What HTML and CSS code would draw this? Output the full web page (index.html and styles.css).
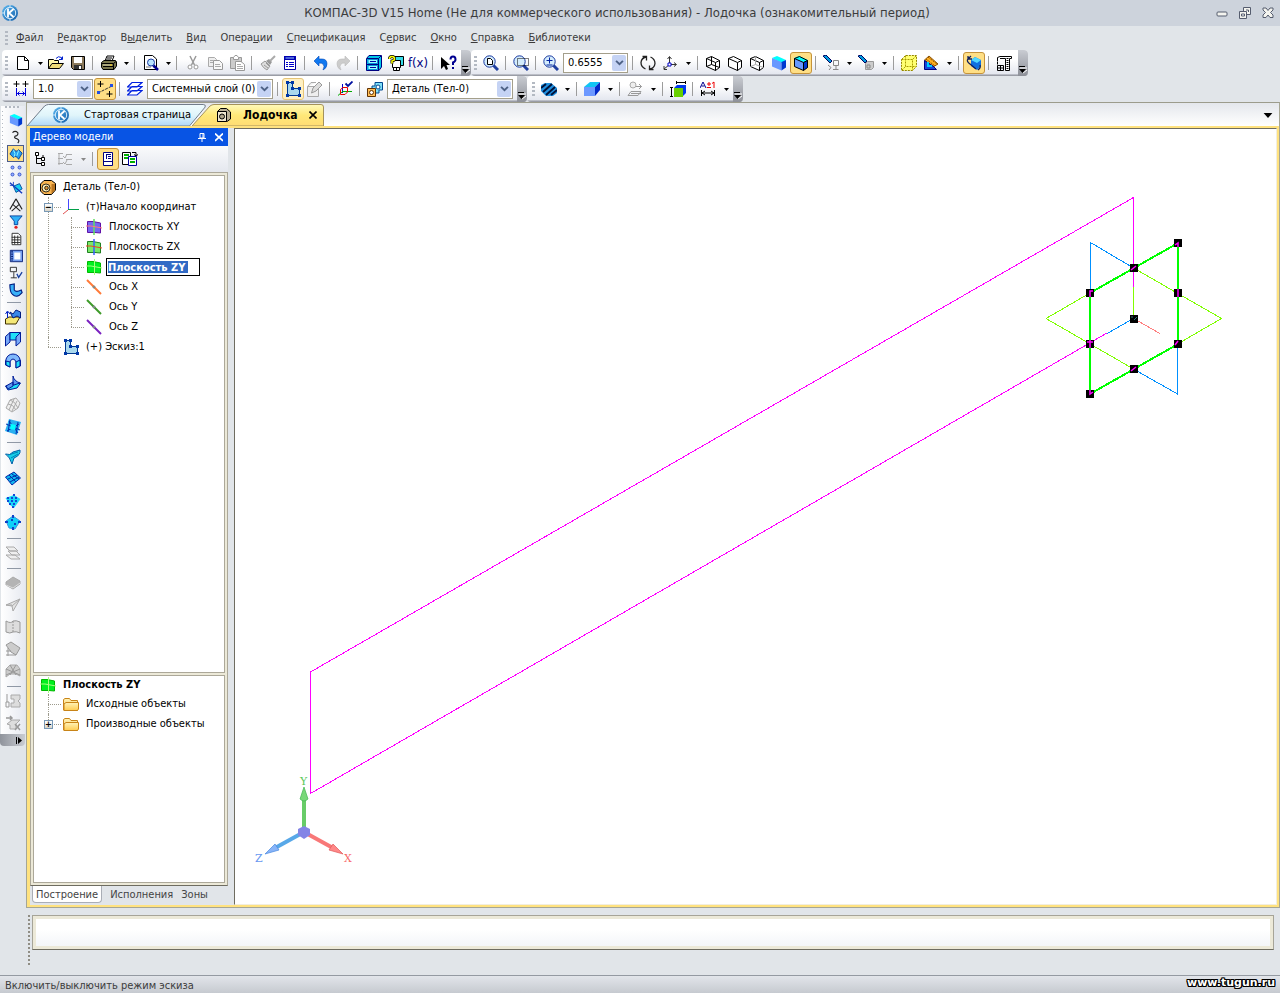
FILE: index.html
```html
<!DOCTYPE html>
<html lang="ru">
<head>
<meta charset="utf-8">
<title>КОМПАС-3D V15 Home</title>
<link rel="stylesheet" href="styles.css">
</head>
<body>
<svg class="defs" aria-hidden="true">
<defs>
<linearGradient id="gb" x1="0" y1="0" x2="1" y2="1"><stop offset="0" stop-color="#5cb8f0"/><stop offset="1" stop-color="#125ca8"/></linearGradient>
<linearGradient id="gf" x1="0" y1="0" x2="0" y2="1"><stop offset="0" stop-color="#fff3b8"/><stop offset="1" stop-color="#ffcc50"/></linearGradient>
<symbol id="logo" viewBox="0 0 16 16"><circle cx="8" cy="8" r="8" fill="url(#gb)"/><circle cx="8" cy="8" r="5.700" fill="none" stroke="#d8ecfa"/><path d="M6 3.500V12.500M11.500 4L7 8L11.500 12" fill="none" stroke="#fff" stroke-width="1.800"/><path d="M0 8H3M8 0V2M8 14V16" stroke="#d8ecfa"/></symbol>
<symbol id="new" viewBox="0 0 16 16"><path d="M2.500 1.500H9.500L13.500 5.500V14.500H2.500Z" fill="#fff" stroke="#000"/><path d="M9.500 1.500V5.500H13.500" fill="none" stroke="#000"/></symbol>
<symbol id="open" viewBox="0 0 16 16"><path d="M.5 13.500V4.500H5.500L6.500 5.500H10.500V8.500" fill="#fff7a8" stroke="#000"/><path d="M.5 13.500L4 8.500H15.500L11.500 13.500Z" fill="#f0dc78" stroke="#000"/><path d="M8 3.500Q10 .5 13.500 2.500V5M11 4.500H14.500V1.500" fill="none" stroke="#0020d0"/></symbol>
<symbol id="save" viewBox="0 0 16 16"><path d="M1.500 1.500H14.500V14.500H3.500L1.500 12.500Z" fill="#8c7a5c" stroke="#000"/><path d="M4 2H12V8H4Z" fill="#fff"/><path d="M4 10H12V14H4Z" fill="#333"/><path d="M9 11H11V14H9Z" fill="#fff"/></symbol>
<symbol id="print" viewBox="0 0 16 16"><path d="M4 6L6 1H13L11 6Z" fill="#fff" stroke="#000"/><path d="M6 3H11M5 5H10" stroke="#000"/><path d="M.5 7.500L3 5.500H14.500L15.500 7V11L13 14.500H2L.5 12Z" fill="#77754c" stroke="#000"/><path d="M1 8.500H12.500L15 6.500M2 11.500H12M12.500 8.500V14" fill="none" stroke="#000"/><path d="M2 10H11" stroke="#dfdab0"/><path d="M9 10H11" stroke="#fc0"/></symbol>
<symbol id="preview" viewBox="0 0 16 16"><path d="M1.500 14.500V.5H9.500L13.500 4V14.500Z" fill="#fff" stroke="#000"/><path d="M3 12H8M10 12H12" stroke="#777"/><path d="M10 10L15 15" stroke="#000090" stroke-width="2.500"/><circle cx="8" cy="7.500" r="3.500" fill="#b8e4ff" stroke="#1838a0"/></symbol>
<symbol id="cut" viewBox="0 0 16 16"><path d="M5 1L9.500 10M11 1L6.500 10" stroke="#999" stroke-width="1.500"/><circle cx="5" cy="12" r="2" fill="#fff" stroke="#999"/><circle cx="11" cy="12" r="2" fill="#fff" stroke="#999"/></symbol>
<symbol id="copy" viewBox="0 0 16 16"><path d="M1.500 2.500H7.500L9.500 4.500V11.500H1.500Z" fill="#eee" stroke="#aaa"/><path d="M6.500 5.500H12.500L15.500 8.500V14.500H6.500Z" fill="#f8f8f8" stroke="#999"/><path d="M3 5.500H6M3 7.500H6M8 9.500H13M8 11.500H14" stroke="#aaa"/></symbol>
<symbol id="paste" viewBox="0 0 16 16"><path d="M1.500 2.500H12.500V13.500H1.500Z" fill="#ccc" stroke="#999"/><path d="M4.500 4.500V2.500L6 .5H8L9.500 2.500V4.500Z" fill="#fff" stroke="#999"/><path d="M6.500 6.500H12L15.500 9.500V15.500H6.500Z" fill="#fff" stroke="#999"/><path d="M8 9.500H12M8 11.500H14M8 13.500H14" stroke="#aaa"/></symbol>
<symbol id="brush" viewBox="0 0 16 16"><path d="M1 9L5 6L10 11L7 15Q3 13 1 9Z" fill="#ddd" stroke="#999"/><path d="M4 10L8 13M6 8L9 11" stroke="#999"/><path d="M6 6L9 4L12 7L10 10Z" fill="#999"/><path d="M10 6L15 1" stroke="#aaa" stroke-width="2"/></symbol>
<symbol id="props" viewBox="0 0 16 16"><path d="M2.500 2H13.500V14.500H2.500Z" fill="#fff" stroke="#0000a0"/><path d="M2 1H14V5H2Z" fill="#0000b0"/><path d="M4 7.500H6M4 9.500H6M4 11.500H6M7 7.500H12M7 9.500H12M7 11.500H12" stroke="#00c"/><path d="M3.500 3H12" stroke="#9cf"/></symbol>
<symbol id="undo" viewBox="0 0 16 16"><path d="M1 6L6 1V4H9Q14 4 14 9Q14 13 10 15Q12 11 10 9Q9 8 6 8V11Z" fill="#1078f0" stroke="#0048b8" stroke-width=".6"/></symbol>
<symbol id="redo" viewBox="0 0 16 16"><path d="M15 6L10 1V4H7Q2 4 2 9Q2 13 6 15Q4 11 6 9Q7 8 10 8V11Z" fill="#ccc" stroke="#bbb" stroke-width=".6"/></symbol>
<symbol id="cabinet" viewBox="0 0 16 16"><path d="M.5 3.500L3 .5H15.500V12L13 15.500H.5Z" fill="#00c8e8" stroke="#000080"/><path d="M1 3.500H12.500V15M12.500 3.500L15 1M1 9.500H12.500" fill="none" stroke="#000080"/><path d="M2 4.500H11.500V8.500H2ZM2 10.500H11.500V14.500H2Z" fill="#9ff" stroke="#0090d8"/><path d="M4 6.500H10M4 12.500H10" stroke="#0000a0"/></symbol>
<symbol id="vars" viewBox="0 0 16 16"><path d="M6.500 1.500H15.500V10.500H6.500Z" fill="#36dce8" stroke="#000"/><path d="M4.500 5.500H12.500V12.500H4.500Z" fill="#fff" stroke="#000"/><path d="M5.500 12.500H11.500V15.500H5.500ZM8.500 12.500V15.500" fill="#fff" stroke="#000"/><path d="M1.500 4Q1.500 1.500 4 1.500T6.500 4Q6.500 5.500 4 6V8.500" fill="none" stroke="#000" stroke-width="3"/><path d="M1.500 4Q1.500 1.500 4 1.500T6.500 4Q6.500 5.500 4 6V8.500" fill="none" stroke="#ff0" stroke-width="1.600"/></symbol>
<symbol id="help" viewBox="0 0 16 16"><path d="M0 2V14L3 11L5 15L7 14L5.500 10H9Z" fill="#000"/><path d="M9.500 4.500Q9.500 1.500 12 1.500T14.500 4.500Q14.500 6.500 12 7.500V10M12 12V14" fill="none" stroke="#000090" stroke-width="2"/></symbol>
<symbol id="mag" viewBox="0 0 16 16"><path d="M10.500 10.500L15 15" stroke="#2040a0" stroke-width="3"/><circle cx="6.500" cy="6.500" r="5.700" fill="#d4ecfc" stroke="#1838a0"/></symbol>
<symbol id="magp" viewBox="0 0 16 16"><use href="#mag"/><path d="M4.500 3.500H7.500L9.500 5.500V9.500H4.500Z" fill="#fff" stroke="#000"/></symbol>
<symbol id="magr" viewBox="0 0 16 16"><use href="#mag"/><path d="M4.500 3.500H15.500V10.500H4.500Z" fill="none" stroke="#000" stroke-dasharray="1 1"/></symbol>
<symbol id="magz" viewBox="0 0 16 16"><use href="#mag"/><path d="M3.500 5.500H9.500M6.500 2.500V8.500M3.500 10H9.500" stroke="#0020a0"/></symbol>
<symbol id="rot" viewBox="0 0 16 16"><path d="M5.500 14Q1 12 1 7.500Q1.500 3 6 2M10.500 2Q15 4 15 8.500Q14.500 13 10 14M2.500 1.500H6.500V5.500M13.500 14.500H9.500V10.500" fill="none" stroke="#222" stroke-width="1.300"/></symbol>
<symbol id="axes" viewBox="0 0 16 16"><path d="M7.500 9V2M8 9.500H14M7 10L2 14M5.500 4L7.500 1.500L9.500 4M12 7.500L14.500 9.500L12 11.500M2 11V14.500H5" fill="none" stroke="#333"/><path d="M6 8H9V11H6Z" fill="#fff" stroke="#00c"/></symbol>
<symbol id="wire" viewBox="0 0 16 16"><path d="M1.500 3.500L6.500 1.500L14.500 5.500V12.500L10.500 15.500L1.500 11.500ZM1.500 3.500L10.500 7.500V15.500M10.500 7.500L14.500 5.500" fill="#fff" stroke="#000"/></symbol>
<symbol id="wire1" viewBox="0 0 16 16"><use href="#wire"/><path d="M6.500 1.500V9.500L1.500 11.500M6.500 9.500L14.500 12.500" fill="none" stroke="#000"/></symbol>
<symbol id="wire3" viewBox="0 0 16 16"><use href="#wire"/><path d="M6.500 1.500V9.500L1.500 11.500M6.500 9.500L14.500 12.500" fill="none" stroke="#aaa"/></symbol>
<symbol id="solid" viewBox="0 0 16 16"><path d="M1 3L6 1L15 5L10.500 8Z" fill="#0ff"/><path d="M1 3L10.500 7V15.500L1 11.500Z" fill="#6898ff"/><path d="M10.500 7L15 5V12.500L10.500 15.500Z" fill="#0038d0"/></symbol>
<symbol id="solide" viewBox="0 0 16 16"><use href="#solid"/><path d="M1.500 3.500L6.500 1.500L14.500 5.500V12.500L10.500 15.500L1.500 11.500ZM1.500 3.500L10.500 7.500V15.500M10.500 7.500L14.500 5.500" fill="none" stroke="#000"/></symbol>
<symbol id="torch1" viewBox="0 0 16 16"><path d="M0 1L3 0L9 6L7 8Z" fill="#009cdd" stroke="#000060"/><path d="M10.500 5.500H15.500V10.500H10.500ZM13 11V14.500M10 14.500H15.500M5 10L8 12.500L6 15" fill="none" stroke="#888"/></symbol>
<symbol id="torch2" viewBox="0 0 16 16"><path d="M0 1L3 0L9 6L7 8Z" fill="#009cdd" stroke="#000060"/><path d="M7.500 8.500L9.500 6.500H15.500V12.500L13.500 14.500H7.500Z" fill="#ccc" stroke="#999"/><path d="M9 10H12V13H9Z" fill="none" stroke="#888"/></symbol>
<symbol id="ycube" viewBox="0 0 16 16"><path d="M.5 4.500L4.500 .5H15.500V11.500L11.500 15.500H.5Z" fill="#ffff70" stroke="#948600" stroke-dasharray="2 1"/><path d="M.5 4.500H11.500V15.500M11.500 4.500L15.500 .5M4.500 .5V11.500H15.500M4.500 11.500L.5 15.500" fill="none" stroke="#a89c00" stroke-dasharray="2 1"/></symbol>
<symbol id="section" viewBox="0 0 16 16"><path d="M1.500 5L6 1L15 9L10 12Z" fill="#ffb020" stroke="#8c5000"/><path d="M3 4L12 11M5 2L14 9" stroke="#8c5000" stroke-dasharray="2 1"/><path d="M1.500 5.500V14.500H13.500L10 11Z" fill="#1848d8" stroke="#000080"/><path d="M5 7V11H9" fill="none" stroke="#0cf" stroke-width="2"/></symbol>
<symbol id="turn" viewBox="0 0 16 16"><path d="M5 5L9 2L15 5V11L11 15L5 11Z" fill="#1070e0"/><path d="M5 5L9 2L15 5L11 8Z" fill="#50d8ff"/><path d="M5 1L2 4Q0 6 4 9L10 14M2 1V4H6M12 15Q15 13 14 10" fill="none" stroke="#10205c" stroke-width="1.300"/></symbol>
<symbol id="crane" viewBox="0 0 16 16"><path d="M1.500 6V2.500L4 1.500H15.500V3.500H13.500V15.500H9.500V3.500H4" fill="#fff" stroke="#000"/><path d="M1.500 6.500V9.500M1.500 10.500H7.500V15.500H1.500ZM4.500 10V15M2 13H7" fill="none" stroke="#000"/><path d="M11.500 3V15" stroke="#000" stroke-width="2" stroke-dasharray="1 1"/></symbol>
<symbol id="step" viewBox="0 0 16 16"><path d="M3.500 0V6M.5 3H6.500M12.500 0V6M9.500 3H15.500" stroke="#000"/><path d="M3.500 7V15M12.500 7V15M4 12.500H12M6.500 10.500L4.500 12.500L6.500 14.500M9.500 10.500L11.500 12.500L9.500 14.500" fill="none" stroke="#00d"/></symbol>
<symbol id="snap" viewBox="0 0 16 16"><path d="M3.500 0V6M.5 3H6.500M12.500 10V16M9.500 13H15.500" stroke="#000"/><path d="M1 12L15 5" stroke="#333" stroke-dasharray="3 1"/><path d="M0 10H3V13H0ZM13 3H16V6H13Z" fill="#2450e0"/></symbol>
<symbol id="layers" viewBox="0 0 16 16"><path d="M.5 14L5 9.500H15L10 14ZM.5 10L5 5.500H15L10 10ZM.5 6L5 1.500H15L10 6Z" fill="#fff" stroke="#0020e0" stroke-width="1.200"/></symbol>
<symbol id="sketch" viewBox="0 0 16 16"><path d="M2.500 1.500H7.500V7.500H14.500V14.500H2.500Z" fill="#a9d8ed" stroke="#003890"/><path d="M1 0H4V3H1ZM6 0H9V3H6ZM6 6H9V9H6ZM13 6H16V9H13ZM13 13H16V16H13ZM1 13H4V16H1Z" fill="#0038a8"/></symbol>
<symbol id="sketch2" viewBox="0 0 16 16"><path d="M.5 5.500H11.500V15.500H.5ZM.5 5.500L4 1.500H9" fill="#eee" stroke="#aaa"/><path d="M4.500 12L6 7L12 1L15 4L9 10Z" fill="#ddd" stroke="#999"/></symbol>
<symbol id="reb" viewBox="0 0 16 16"><path d="M5.500 3V12" stroke="#0000d0"/><path d="M5 10.500H15M1 14.500L5 11" stroke="#0a0"/><path d="M3.500 8.500L6 6.500H10.500V11L8 13.500H3.500Z" fill="none" stroke="#e00"/><path d="M8.500 2.500L11 5L15.500 .5" fill="none" stroke="#0010a0" stroke-width="1.800"/></symbol>
<symbol id="parts" viewBox="0 0 16 16"><path d="M8 1.500H15.500V9H12V12H5V5H8Z" fill="#80e0f8" stroke="#004890"/><circle cx="11" cy="6" r="2" fill="#fff" stroke="#004890"/><path d="M.5 7.500H8.500V15.500H.5Z" fill="#ffbd55" stroke="#603000"/><circle cx="4.500" cy="11.500" r="2" fill="#fff" stroke="#603000"/></symbol>
<symbol id="zebra" viewBox="0 0 16 16"><path d="M0 4L4 2H10L16 7V12L12 15H5L0 10Z" fill="#2090e0"/><path d="M0 7L5 3M2 11L11 3M5 14L14 6M10 14L16 9" stroke="#00123a" stroke-width="2"/></symbol>
<symbol id="face" viewBox="0 0 16 16"><path d="M0 6L6 1H16L11 6Z" fill="#10c4f4"/><path d="M0 6H11V15H0Z" fill="#6c98ff"/><path d="M11 6L16 1V9L11 15Z" fill="#0028c8"/></symbol>
<symbol id="msr" viewBox="0 0 16 16"><circle cx="6" cy="4" r="3" fill="#eee" stroke="#aaa"/><path d="M9 5.500H14.500M12 3L14.500 5.500L12 8M1 14.500L4 10.500H14L11 14.500ZM4 12.500H14" fill="none" stroke="#999"/></symbol>
<symbol id="dimc" viewBox="0 0 16 16"><path d="M4 7L7 4H16V12L13 15Z" fill="#0038f0"/><path d="M4 7H13V16H4Z" fill="#68d000"/><path d="M1.500 7V15.500M0 6.500H3M0 15.500H3M7 1.500H15M6.500 0V3M15.500 0V3" stroke="#000"/></symbol>
<symbol id="tol" viewBox="0 0 16 16"><path d="M0 7L3 1L6 7M1.500 5H4.500" fill="none" stroke="#000090"/><path d="M7 3H11M9 1V5M7 6.500H11M12 2.500L14 1V7" fill="none" stroke="#e00"/><path d="M1.500 9V15M14.500 9V15M2 12H14M5 10L2 12L5 14M11 10L14 12L11 14" fill="none" stroke="#000"/></symbol>
<symbol id="curve" viewBox="0 0 16 16"><path d="M4 3Q7 0 10 3Q11 6 7 7Q5 9 9 10Q13 12 10 15" fill="none" stroke="#222" stroke-width="1.300"/></symbol>
<symbol id="surf" viewBox="0 0 16 16"><path d="M1 8L5 2Q8 7 11 3L15 7L11 14Q8 9 5 12Z" fill="#28a0f0" stroke="#003c98"/><path d="M5 3Q8 8 6 11M11 4L9 10" stroke="#9ff" fill="none"/></symbol>
<symbol id="dots" viewBox="0 0 16 16"><g fill="#98b0ff" stroke="#2848c8"><circle cx="4" cy="4" r="1.700"/><circle cx="12" cy="4" r="1.700"/><circle cx="4" cy="12" r="1.700"/><circle cx="12" cy="12" r="1.700"/></g></symbol>
<symbol id="aux" viewBox="0 0 16 16"><path d="M5 6L12 3L15 9L8 13Z" fill="#18d0f0" stroke="#004098"/><path d="M1 2L15 14" stroke="#1038c0" stroke-width="1.500"/><path d="M1 5H5V1" stroke="#1038c0" fill="none"/></symbol>
<symbol id="compass" viewBox="0 0 16 16"><path d="M8 1L1 13M8 1L15 13M3 15L12 7M13 15L4 7" fill="none" stroke="#222" stroke-width="1.200"/></symbol>
<symbol id="funnel" viewBox="0 0 16 16"><path d="M1 1H15L10 7V11H6V7Z" fill="#30b0f8" stroke="#003c98"/><circle cx="8" cy="14" r="1.800" fill="#e02020"/></symbol>
<symbol id="sheet" viewBox="0 0 16 16"><path d="M3.500 1.500H10.500L13.500 4.500V14.500H3.500ZM3 6H13M3 9H13M3 12H13M6.500 4V14M10 4V14" fill="#fff" stroke="#222"/></symbol>
<symbol id="book" viewBox="0 0 16 16"><path d="M1.500 1.500H15.500V14.500H1.500Z" fill="#78a0f0" stroke="#001870"/><path d="M6 4H13V12H6Z" fill="#fff"/><path d="M3.500 2V14" stroke="#001870" stroke-width="2" stroke-dasharray="1 1"/></symbol>
<symbol id="check" viewBox="0 0 16 16"><path d="M1.500 1.500H8.500V6.500H1.500ZM5.500 7V13.500M2 13.500H9" fill="none" stroke="#222"/><path d="M9 9L11 13L15 7" fill="none" stroke="#1840a0" stroke-width="1.500"/></symbol>
<symbol id="bend" viewBox="0 0 16 16"><path d="M1 2L6 1V8Q8 11 14 8L15 11Q9 18 4 13Q1 11 1 2Z" fill="#38b0f8" stroke="#001c80" stroke-width="1.300"/></symbol>
<symbol id="extr" viewBox="0 0 16 16"><path d="M.5 10L4 8H15L11 15H.5Z" fill="#f4e878" stroke="#403000"/><path d="M5 3L8 5L11 1L15.500 3V9L12 7L8 9Z" fill="#3888e8" stroke="#001c80"/><path d="M2.500 9V3M.5 5L2.500 2L5 5" fill="none" stroke="#0020c0"/></symbol>
<symbol id="s1" viewBox="0 0 16 16"><path d="M.5 5.500L5 1.500V11L.5 15Z" fill="#78a8f8" stroke="#001c98"/><path d="M5 1.500H15.500V10L11 9H5Z" fill="#20e0f8" stroke="#001c98"/><path d="M11 6L15.500 1.500V11L11 15Z" fill="#78a8f8" stroke="#001c98"/></symbol>
<symbol id="s2" viewBox="0 0 16 16"><path d="M.5 12V8Q2 1 8 1T15.500 8V13L11 15V9Q10 6 8 6T5 9V14Z" fill="#80b8fc" stroke="#001c98"/><path d="M11 9L15 7V13L11 15ZM1 8L5 9V14L1 12Z" fill="#20e0f8" stroke="#001c98"/></symbol>
<symbol id="s3" viewBox="0 0 16 16"><path d="M.5 11L8 9L15.500 8L12 13L3 15Z" fill="#20e0f8" stroke="#001c98"/><path d="M8 10V1Q9 6 15 8L9 10ZM1 11L8 7V11L3 14Z" fill="#6098f0" stroke="#001c98"/></symbol>
<symbol id="s4" viewBox="0 0 16 16"><path d="M1 11L5 3L11 1L15 6L13 11L7 15Z" fill="#eee" stroke="#aaa"/><path d="M3 7Q8 7 11 13M5 3Q10 4 13 11M9 2L4 13M12 4L7 14" fill="none" stroke="#aaa"/></symbol>
<symbol id="s5" viewBox="0 0 16 16"><path d="M4 0L16 3L12 16L0 12Z" fill="#28b0f0"/><path d="M1 5L15 11M5 1L3 13M13 3L11 15M2 12L14 5M4 2L13 14" stroke="#0030b0"/><path d="M6 5L11 6L10 11L5 10Z" fill="#0ff"/></symbol>
<symbol id="s6" viewBox="0 0 16 16"><path d="M.5 5Q5 7 8 3L15 1Q16 6 9 9L7 15Q5 8 .5 5Z" fill="#18d0e8" stroke="#0060a8"/><path d="M3 6L13 3M6 9L13 5" stroke="#0080b8"/></symbol>
<symbol id="s7" viewBox="0 0 16 16"><path d="M.5 6L9 1L15.500 7L7 14Z" fill="#10b8f0" stroke="#0028a8"/><path d="M3 8L12 4M5 11L14 6M4 4L11 11M7 3L14 8" stroke="#0028a8"/></symbol>
<symbol id="s8" viewBox="0 0 16 16"><path d="M.5 5L9 2L15.500 6L9 15L5 12Z" fill="#18d8f8"/><path d="M2 5H14M2 8H14M4 11H12M7 14H10M8 2H11" stroke="#1048d8" stroke-width="2" stroke-dasharray="2 2"/></symbol>
<symbol id="s9" viewBox="0 0 16 16"><path d="M1 6L8 1L15 6L10 14L4 13Z" fill="#10d0f8" stroke="#3898e0"/><path d="M8 0V3M8 12V15M0 7H3M13 7H16M6 5H8M9 9H11" stroke="#1040c8" stroke-width="2"/></symbol>
<symbol id="g1" viewBox="0 0 16 16"><path d="M1 2H9L13 6H5ZM3 6H11L15 10H7ZM1 10H10L15 14H6Z" fill="#eee" stroke="#aaa"/></symbol>
<symbol id="g2" viewBox="0 0 16 16"><path d="M1 7L8 2L15 6V9L8 14L1 10Z" fill="#b4b4b4" stroke="#aaa"/><path d="M1 10L8 13L15 8" fill="none" stroke="#ddd"/></symbol>
<symbol id="g3" viewBox="0 0 16 16"><path d="M1 8L15 2L8 14L7 9Z" fill="#e4e4e4" stroke="#aaa"/><path d="M7 9L15 2M1 8H7" stroke="#aaa"/></symbol>
<symbol id="g4" viewBox="0 0 16 16"><path d="M1 2Q6 5 8 2Q11 1 15 3V14Q11 12 8 13Q5 15 1 13Z" fill="#ddd" stroke="#999"/><path d="M8 2V13" stroke="#999" stroke-dasharray="2 1"/></symbol>
<symbol id="g5" viewBox="0 0 16 16"><path d="M1 4L6 1L15 7L11 14L6 11Z" fill="#ccc" stroke="#999"/><path d="M3 7V15M1 14H11M1 10H6" stroke="#999"/></symbol>
<symbol id="g6" viewBox="0 0 16 16"><path d="M1 6L5 2H12L15 6V13L11 11H5L1 14Z" fill="#ccc" stroke="#aaa"/><path d="M1 6L15 12M15 6L1 12M5 2L11 12M11 2L5 12" stroke="#999"/></symbol>
<symbol id="g7" viewBox="0 0 16 16"><path d="M6 2H15V6L13 8L15 10V14H6V10H9V6H6Z" fill="#ddd" stroke="#aaa"/><path d="M2 1V9M1 9H4V14H1Z" fill="none" stroke="#999"/></symbol>
<symbol id="g8" viewBox="0 0 16 16"><path d="M2 9L7 5H15L11 9V14H5V10Z" fill="#ddd" stroke="#aaa"/><path d="M1 3H7M5 1L7 3L5 5M10 9L15 15M15 9L10 15" fill="none" stroke="#999" stroke-width="1.500"/></symbol>
<symbol id="tree" viewBox="0 0 16 16"><path d="M3.500 3V12.500H10M4 7.500H9M10 7.500V4" fill="none" stroke="#000"/><path d="M2.500 1.500H5.500V4.500H2.500ZM8.500 6.500H11.500V9.500H8.500ZM8.500 11.500H11.500V14.500H8.500Z" fill="#fff" stroke="#000"/></symbol>
<symbol id="checks" viewBox="0 0 16 16"><path d="M1 2.500H6M1 7.500H6M1 12.500H6M9 3.500H15M9 8.500H15M9 13.500H15M2 2V14" stroke="#aaa"/><path d="M6 5L8 7L10 3M6 11L8 13L10 9" fill="none" stroke="#aaa"/></symbol>
<symbol id="doc" viewBox="0 0 16 16"><path d="M3.500 1.500H12.500V14.500H3.500Z" fill="#fff" stroke="#000080"/><path d="M3 10.500H13M6 3.500H11M8 5.500H11M8 7.500H11M6.500 3V8" stroke="#000080"/></symbol>
<symbol id="docs" viewBox="0 0 16 16"><path d="M.5 1.500H8.500V13.500H.5Z" fill="#fff" stroke="#000"/><path d="M6.500 5.500H14.500V14.500H6.500Z" fill="#fff" stroke="#0000a0"/><path d="M2 4H7M2 7H6M8 8H13M8 11H13" stroke="#00b000" stroke-width="2"/><path d="M10 1.500H14V5M12 3.500L14 5L16 3.500" fill="none" stroke="#000"/></symbol>
<symbol id="part" viewBox="0 0 16 16"><path d="M.5 5L4 1.500H11.500L15.500 4.500V11L11.500 15.500H4L.5 12Z" fill="#f8b450" stroke="#000"/><path d="M11.500 5V15L15 11V5Z" fill="#b87420"/><circle cx="6" cy="9" r="4" fill="#fff0b8" stroke="#000" stroke-width=".8"/><circle cx="6.500" cy="9" r="1.800" fill="#e09838" stroke="#000" stroke-width=".8"/></symbol>
<symbol id="partg" viewBox="0 0 16 16"><path d="M1.500 4.500L4.500 1.500H10.500L14.500 5V12L11 14.500H1.500Z" fill="#b8ae96" stroke="#000"/><path d="M1.500 4.500H10.500V14.500H1.500Z" fill="#f0e8d0" stroke="#000"/><circle cx="6" cy="9.500" r="2.500" fill="#b0a68c" stroke="#000"/></symbol>
<symbol id="origin" viewBox="0 0 16 16"><path d="M5.500 0V11" stroke="#4848ff"/><path d="M5 10.500H16" stroke="#00a048"/><path d="M5 11L0 15" stroke="#e05050"/></symbol>
<symbol id="plxy" viewBox="0 0 16 16"><path d="M1.500 2.500H7L14.500 4V14L9 13.500H1.500Z" fill="#7468f0" stroke="#6010a8"/><path d="M8 0V16" stroke="#60e060" stroke-width="1.500"/><path d="M0 7H5L16 9" fill="none" stroke="#ff7880"/></symbol>
<symbol id="plzx" viewBox="0 0 16 16"><path d="M1.500 2.500H7L14.500 4V14L9 13.500H1.500Z" fill="#78e868" stroke="#208020"/><path d="M8 0V16" stroke="#3860ff" stroke-width="1.500"/><path d="M0 7H5L16 9" fill="none" stroke="#f04020"/></symbol>
<symbol id="plzy" viewBox="0 0 16 16"><path d="M1.500 2.500H7L14.500 4V14L9 13.500H1.500Z" fill="#00f020" stroke="#00b800"/><path d="M8.500 0V16M0 7H5L16 9" fill="none" stroke="#a8ff80"/></symbol>
<symbol id="axis" viewBox="0 0 16 16"><path d="M1 1L15 15" stroke="currentColor" stroke-width="2"/><circle cx="8" cy="8" r="1" fill="#fff" stroke="#60706a"/></symbol>
<symbol id="folder" viewBox="0 0 16 16"><path d="M.5 14V3.500L2 2.500H6.500L8 4.500H14.500V14.500H1Z" fill="url(#gf)" stroke="#c88418"/><path d="M1 14.500V8L3 6.500H15.500V13L14.500 14.500Z" fill="url(#gf)" stroke="#c88418"/></symbol>
<symbol id="dd" viewBox="0 0 7 4"><path d="M0 0H7L3.500 4Z" fill="currentColor"/></symbol>
<symbol id="more" viewBox="0 0 8 8"><path d="M1 2H8M4 7L8 4" stroke="#fff"/><path d="M0 .5H6" stroke="#000"/><path d="M0 3H7L3.500 7Z" fill="#000"/></symbol>
<symbol id="chev" viewBox="0 0 10 7"><path d="M1 1L5 5L9 1" fill="none" stroke="#4d6185" stroke-width="2.200"/></symbol>
</defs>
</svg>

<header class="title">
  <svg class="logo"><use href="#logo"/></svg>
  <h1>КОМПАС-3D V15 Home (Не для коммерческого использования) - Лодочка (ознакомительный период)</h1>
  <div class="winbtns">
    <button aria-label="Свернуть"><svg viewBox="0 0 12 12"><rect x="1" y="5" width="10" height="4" rx="1" fill="#f4f4ef" stroke="#555c6e"/></svg></button>
    <button aria-label="Восстановить"><svg viewBox="0 0 12 12"><path d="M4.500 .5H11.500V7.500H4.500ZM7 3H9.500V5" fill="#f4f4ef" stroke="#555c6e"/><path d="M.5 4.500H7.500V11.500H.5Z" fill="#f4f4ef" stroke="#555c6e"/><path d="M2.500 7H5.500V9H2.500Z" fill="#fff" stroke="#555c6e"/></svg></button>
    <button aria-label="Закрыть"><svg viewBox="0 0 12 12"><path d="M1 1H4L6 3.500L8 1H11V3L8.500 5.500L11 8V10.500H8L6 8L4 10.500H1V8L3.500 5.500L1 3Z" fill="#f4f4ef" stroke="#555c6e"/></svg></button>
  </div>
</header>

<nav class="menu">
  <i class="grip"></i>
  <a href="#"><u>Ф</u>айл</a><a href="#"><u>Р</u>едактор</a><a href="#">В<u>ы</u>делить</a><a href="#"><u>В</u>ид</a><a href="#">Опера<u>ц</u>ии</a><a href="#"><u>С</u>пецификация</a><a href="#">С<u>е</u>рвис</a><a href="#"><u>О</u>кно</a><a href="#"><u>С</u>правка</a><a href="#"><u>Б</u>иблиотеки</a>
</nav>

<div class="bars">
  <div class="bar narrow">
    <i class="grip"></i>
    <button class="b" aria-label="Создать"><svg><use href="#new"/></svg></button><button class="d" aria-label="Ещё"><svg><use href="#dd"/></svg></button>
    <button class="b" aria-label="Открыть"><svg><use href="#open"/></svg></button>
    <button class="b" aria-label="Сохранить"><svg><use href="#save"/></svg></button><i class="sep"></i>
    <button class="b" aria-label="Печать"><svg><use href="#print"/></svg></button><button class="d" aria-label="Ещё"><svg><use href="#dd"/></svg></button><i class="sep"></i>
    <button class="b" aria-label="Просмотр"><svg><use href="#preview"/></svg></button><button class="d" aria-label="Ещё"><svg><use href="#dd"/></svg></button><i class="sep"></i>
    <button class="b" aria-label="Вырезать"><svg><use href="#cut"/></svg></button>
    <button class="b" aria-label="Копировать"><svg><use href="#copy"/></svg></button>
    <button class="b" aria-label="Вставить"><svg><use href="#paste"/></svg></button><i class="sep"></i>
    <button class="b" aria-label="Копировать свойства"><svg><use href="#brush"/></svg></button>
    <button class="b" aria-label="Свойства"><svg><use href="#props"/></svg></button><i class="sep"></i>
    <button class="b" aria-label="Отменить"><svg><use href="#undo"/></svg></button>
    <button class="b" aria-label="Повторить"><svg><use href="#redo"/></svg></button><i class="sep"></i>
    <button class="b" aria-label="Менеджер библиотек"><svg><use href="#cabinet"/></svg></button>
    <button class="b" aria-label="Структура"><svg><use href="#vars"/></svg></button>
    <button class="b fx" aria-label="Переменные">f(x)</button><i class="sep"></i>
    <button class="b" aria-label="Справка"><svg><use href="#help"/></svg></button>
    <button class="cap" aria-label="Настройка панели"><svg><use href="#more"/></svg></button>
  </div>
  <div class="bar">
    <i class="grip"></i>
    <button class="b" aria-label="Показать всё"><svg><use href="#magp"/></svg></button><i class="sep"></i>
    <button class="b" aria-label="Масштаб рамкой"><svg><use href="#magr"/></svg></button><i class="sep"></i>
    <button class="b" aria-label="Масштаб"><svg><use href="#magz"/></svg></button>
    <span class="combo w65"><select aria-label="Текущий масштаб"><option>0.6555</option></select><i><svg><use href="#chev"/></svg></i></span><i class="sep"></i>
    <button class="b" aria-label="Повернуть"><svg><use href="#rot"/></svg></button>
    <button class="b" aria-label="Ориентация"><svg><use href="#axes"/></svg></button><button class="d" aria-label="Ещё"><svg><use href="#dd"/></svg></button><i class="sep"></i>
    <button class="b" aria-label="Каркас"><svg><use href="#wire1"/></svg></button>
    <button class="b" aria-label="Без невидимых линий"><svg><use href="#wire"/></svg></button>
    <button class="b" aria-label="Невидимые линии тонкие"><svg><use href="#wire3"/></svg></button>
    <button class="b" aria-label="Полутоновое"><svg><use href="#solid"/></svg></button>
    <button class="b on" aria-label="Полутоновое с каркасом"><svg><use href="#solide"/></svg></button><i class="sep"></i>
    <button class="b" aria-label="Скрыть объекты"><svg><use href="#torch1"/></svg></button><button class="d" aria-label="Ещё"><svg><use href="#dd"/></svg></button>
    <button class="b" aria-label="Скрыть в компонентах"><svg><use href="#torch2"/></svg></button><button class="d" aria-label="Ещё"><svg><use href="#dd"/></svg></button><i class="sep"></i>
    <button class="b" aria-label="Габарит"><svg><use href="#ycube"/></svg></button>
    <button class="b" aria-label="Сечение"><svg><use href="#section"/></svg></button><button class="d" aria-label="Ещё"><svg><use href="#dd"/></svg></button><i class="sep"></i>
    <button class="b on" aria-label="Вращение"><svg><use href="#turn"/></svg></button><i class="sep"></i>
    <button class="b" aria-label="Построение"><svg><use href="#crane"/></svg></button>
    <button class="cap late" aria-label="Настройка панели"><svg><use href="#more"/></svg></button>
  </div>
</div>

<div class="bars">
  <div class="bar">
    <i class="grip"></i>
    <button class="b" aria-label="Шаг курсора"><svg><use href="#step"/></svg></button>
    <span class="combo w60"><select aria-label="Шаг"><option>1.0</option></select><i><svg><use href="#chev"/></svg></i></span>
    <button class="b on" aria-label="Привязки"><svg><use href="#snap"/></svg></button><i class="sep"></i>
    <button class="b" aria-label="Слои"><svg><use href="#layers"/></svg></button>
    <span class="combo w126"><select aria-label="Слой"><option>Системный слой (0)</option></select><i><svg><use href="#chev"/></svg></i></span><i class="sep"></i>
    <button class="b hot" aria-label="Эскиз"><svg><use href="#sketch"/></svg></button>
    <button class="b" aria-label="Эскиз из библиотеки"><svg><use href="#sketch2"/></svg></button><i class="sep"></i>
    <button class="b" aria-label="Перестроить"><svg><use href="#reb"/></svg></button><i class="sep"></i>
    <button class="b" aria-label="Исполнение"><svg><use href="#parts"/></svg></button>
    <span class="combo w126"><select aria-label="Деталь"><option>Деталь (Тел-0)</option></select><i><svg><use href="#chev"/></svg></i></span>
    <button class="cap late" aria-label="Настройка панели"><svg><use href="#more"/></svg></button>
  </div>
  <div class="bar wide">
    <i class="grip"></i>
    <button class="b" aria-label="Зебра"><svg><use href="#zebra"/></svg></button><button class="d" aria-label="Ещё"><svg><use href="#dd"/></svg></button><i class="sep"></i>
    <button class="b" aria-label="Грань"><svg><use href="#face"/></svg></button><button class="d" aria-label="Ещё"><svg><use href="#dd"/></svg></button><i class="sep"></i>
    <button class="b" aria-label="Измерить"><svg><use href="#msr"/></svg></button><button class="d" aria-label="Ещё"><svg><use href="#dd"/></svg></button><i class="sep"></i>
    <button class="b" aria-label="Размеры"><svg><use href="#dimc"/></svg></button><i class="sep"></i>
    <button class="b" aria-label="Допуски"><svg><use href="#tol"/></svg></button><button class="d" aria-label="Ещё"><svg><use href="#dd"/></svg></button>
    <button class="cap" aria-label="Настройка панели"><svg><use href="#more"/></svg></button>
  </div>
</div>

<main class="work">
  <aside class="side">
    <i class="hgrip"></i>
    <div class="modes">
      <button aria-label="Деталь"><svg><use href="#solid"/></svg></button>
      <button aria-label="Кривые"><svg><use href="#curve"/></svg></button>
      <button class="on" aria-label="Поверхности"><svg><use href="#surf"/></svg></button>
      <button aria-label="Массивы"><svg><use href="#dots"/></svg></button>
      <button aria-label="Вспомогательная геометрия"><svg><use href="#aux"/></svg></button>
      <button aria-label="Измерения"><svg><use href="#compass"/></svg></button>
      <button aria-label="Фильтры"><svg><use href="#funnel"/></svg></button>
      <button aria-label="Спецификация"><svg><use href="#sheet"/></svg></button>
      <button aria-label="Отчёты"><svg><use href="#book"/></svg></button>
      <button aria-label="Обозначения"><svg><use href="#check"/></svg></button>
      <button aria-label="Листовое тело"><svg><use href="#bend"/></svg></button>
    </div>
    <div class="tools">
      <i class="hsep"></i>
      <button aria-label="Импорт"><svg><use href="#extr"/></svg></button>
      <button aria-label="Выдавливание"><svg><use href="#s1"/></svg></button>
      <button aria-label="Вращение"><svg><use href="#s2"/></svg></button>
      <button aria-label="Кинематическая"><svg><use href="#s3"/></svg></button>
      <button aria-label="По сечениям"><svg><use href="#s4"/></svg></button>
      <button aria-label="Заплатка"><svg><use href="#s5"/></svg></button>
      <i class="hsep"></i>
      <button aria-label="Линейчатая"><svg><use href="#s6"/></svg></button>
      <button aria-label="По сети кривых"><svg><use href="#s7"/></svg></button>
      <button aria-label="По сети точек"><svg><use href="#s8"/></svg></button>
      <button aria-label="По пласту точек"><svg><use href="#s9"/></svg></button>
      <i class="hsep"></i>
      <button aria-label="Эквидистанта"><svg><use href="#g1"/></svg></button>
      <i class="hsep"></i>
      <button aria-label="Сшивка"><svg><use href="#g2"/></svg></button>
      <button aria-label="Усечение"><svg><use href="#g3"/></svg></button>
      <button aria-label="Разбиение"><svg><use href="#g4"/></svg></button>
      <button aria-label="Продление"><svg><use href="#g5"/></svg></button>
      <button aria-label="Восстановить"><svg><use href="#g6"/></svg></button>
      <i class="hsep"></i>
      <button aria-label="Придать толщину"><svg><use href="#g7"/></svg></button>
      <button aria-label="Удалить грани"><svg><use href="#g8"/></svg></button>
    </div>
    <button class="sidecap" aria-label="Настройка панели"><svg viewBox="0 0 6 7"><path d="M.5 0V7" stroke="#000"/><path d="M2 0L6 3.500L2 7Z" fill="#000"/></svg></button>
  </aside>

  <section class="docs">
    <div class="tabs">
      <a href="#" class="tab start"><svg class="shape" viewBox="0 0 190 22" preserveAspectRatio="none"><defs><linearGradient id="t1" x2="0" y2="1"><stop offset="0" stop-color="#f0fcff"/><stop offset=".5" stop-color="#e0f5fa"/><stop offset="1" stop-color="#b0d7f8"/></linearGradient></defs><path d="M0 22L18 2Q20 .5 22 .5H180Q183 .5 182 3L166 22Z" fill="url(#t1)" stroke="#707b8a"/></svg><svg class="ti"><use href="#logo"/></svg><span>Стартовая страница</span></a>
      <a href="#" class="tab cur"><svg class="shape" viewBox="0 0 132 22" preserveAspectRatio="none"><defs><linearGradient id="t2" x2="0" y2="1"><stop offset="0" stop-color="#fffaba"/><stop offset=".5" stop-color="#ffe878"/><stop offset="1" stop-color="#ffdc74"/></linearGradient></defs><path d="M0 22L18 2Q20 .5 22 .5H129Q131.500 .5 131.500 3V22Z" fill="url(#t2)" stroke="#a4925c"/></svg><svg class="ti"><use href="#partg"/></svg><span>Лодочка</span><svg class="x" viewBox="0 0 8 8"><path d="M.5 .5L7.500 7.500M7.500 .5L.5 7.500" stroke="#000" stroke-width="1.600"/></svg></a>
      <button class="tablist" aria-label="Список окон"><svg><use href="#dd"/></svg></button>
    </div>
    <div class="frame">
      <section class="panel">
        <div class="phead"><h2>Дерево модели</h2><button aria-label="Закрепить"><svg viewBox="0 0 8 9"><path d="M2 .5H6V5H2ZM5 1V5M0 5.500H8M4 6V9" fill="none" stroke="#fff"/></svg></button><button aria-label="Закрыть"><svg viewBox="0 0 8 9"><path d="M0 .5L8 8M8 .5L0 8" stroke="#fff" stroke-width="1.700"/></svg></button></div>
        <div class="ptools">
          <button class="b" aria-label="Структура"><svg><use href="#tree"/></svg></button>
          <button class="b" aria-label="Состав"><svg><use href="#checks"/></svg></button><button class="d dim" aria-label="Ещё"><svg><use href="#dd"/></svg></button><i class="sep"></i>
          <button class="b on" aria-label="Отношения"><svg><use href="#doc"/></svg></button>
          <button class="b" aria-label="Окно отношений"><svg><use href="#docs"/></svg></button>
        </div>
        <div class="trees">
          <div class="box main">
            <div class="node"><svg><use href="#part"/></svg><span>Деталь (Тел-0)</span></div>
            <ul>
              <li><button class="exp" aria-label="Свернуть">−</button><div class="node"><svg><use href="#origin"/></svg><span>(т)Начало координат</span></div>
                <ul>
                  <li><div class="node"><svg><use href="#plxy"/></svg><span>Плоскость XY</span></div></li>
                  <li><div class="node"><svg><use href="#plzx"/></svg><span>Плоскость ZX</span></div></li>
                  <li><div class="node edit"><svg><use href="#plzy"/></svg><input aria-label="Имя" value="Плоскость ZY"></div></li>
                  <li><div class="node ax"><svg class="cx"><use href="#axis"/></svg><span>Ось X</span></div></li>
                  <li><div class="node ax"><svg class="cy"><use href="#axis"/></svg><span>Ось Y</span></div></li>
                  <li><div class="node ax"><svg class="cz"><use href="#axis"/></svg><span>Ось Z</span></div></li>
                </ul>
              </li>
              <li><div class="node"><svg><use href="#sketch"/></svg><span>(+) Эскиз:1</span></div></li>
            </ul>
          </div>
          <div class="box rel">
            <div class="node strong"><svg><use href="#plzy"/></svg><span>Плоскость ZY</span></div>
            <ul>
              <li><div class="node"><svg><use href="#folder"/></svg><span>Исходные объекты</span></div></li>
              <li><button class="exp" aria-label="Развернуть">+</button><div class="node"><svg><use href="#folder"/></svg><span>Производные объекты</span></div></li>
            </ul>
          </div>
        </div>
        <div class="ptabs"><a href="#" class="sel">Построение</a><a href="#">Исполнения</a><a href="#">Зоны</a></div>
      </section>
      <div class="canvas">
        <svg viewBox="235 129 1041 775" preserveAspectRatio="xMidYMid meet">
          <g fill="none" shape-rendering="crispEdges">
            <path d="M1133.500 287V197.500L310.500 672V793.500L1107 333" stroke="#f0f"/>
            <path d="M1090.500 293V242.500L1133.500 268M1177.500 344V394L1133.500 369M1133.500 318.500L1107 333.500" stroke="#0090ff"/>
            <path d="M1046 318.500L1090 293M1046 318.500L1133.500 369M1133.500 268L1221.500 318.500L1177.500 344M1133.500 287V318" stroke="#80ff00"/>
            <path d="M1133.500 318.500L1160 333.500" stroke="#ff8080"/>
            <path d="M1090 293L1178 243V344L1090 394Z" stroke="#0f0" stroke-width="2"/>
          </g>
          <path d="M1174 239h8v8h-8zM1130 264h8v8h-8zM1086 289h8v8h-8zM1174 289h8v8h-8zM1130 315h8v8h-8zM1086 340h8v8h-8zM1174 340h8v8h-8zM1130 365h8v8h-8zM1086 390h8v8h-8z" fill="#000"/>
          <path d="M1175 245L1178 243V247M1131 270L1136 266M1090 297V291L1093 291M1178 289V297M1087 342H1093M1090 340V348M1178 341L1175 345M1131 371L1136 367M1090 390V394L1093 392" fill="none" stroke="#f0f" stroke-width="1.500"/>
          <path d="M1131 317H1133M1137 317L1134 320" stroke="#287878" fill="none"/>
          <path d="M304 832V798" stroke="#68cc68" stroke-width="4"/><path d="M300 799L304 787L308 799Q304 803 300 799Z" fill="#78d878" stroke="#40b850" stroke-width=".7"/>
          <path d="M304 832L275 848" stroke="#58a8e8" stroke-width="4"/><path d="M265 854L275 844L279 850Z" fill="#88b4f8" stroke="#4888e0" stroke-width=".7"/>
          <path d="M304 832L333 848" stroke="#f87878" stroke-width="4"/><path d="M343 854L333 844L329 850Z" fill="#ff8888" stroke="#e05858" stroke-width=".7"/>
          <path d="M304 826L310 829V835L304 839L298 835V829Z" fill="#8484e6"/>
          <g class="axl"><text x="300" y="785" fill="#58c858">Y</text><text x="255" y="862" fill="#6898f0">Z</text><text x="344" y="862" fill="#f86868">X</text></g>
        </svg>
      </div>
    </div>
  </section>
</main>

<div class="prop"><i class="vgrip"></i><div class="field"></div></div>
<footer class="status"><span>Включить/выключить режим эскиза</span><b>www.tugun.ru</b></footer>
</body>
</html>
```

FILE: styles.css
```css
* { box-sizing: border-box; }
body {
  margin: 0; min-height: 100vh; display: flex; flex-direction: column;
  background: #e1e5e9; color: #000;
  font: 11px/14px "DejaVu Sans Condensed", "DejaVu Sans", sans-serif;
}
button { border: 0; padding: 0; margin: 0; background: none; font: inherit; color: inherit; display: flex; align-items: center; justify-content: center; flex: none; }
svg { display: block; flex: none; }
i { display: block; flex: none; }
a { color: inherit; text-decoration: none; }
h1, h2 { margin: 0; font-weight: normal; }
ul { list-style: none; margin: 0; padding: 0; }
.defs { position: absolute; width: 0; height: 0; }

.title { height: 26px; background: #cdd3dc; display: flex; align-items: center; padding: 0 6px 0 2px; }
.title .logo { width: 16px; height: 16px; }
.title h1 { flex: 1; text-align: center; font: 13px/18px "DejaVu Sans Condensed", "DejaVu Sans", sans-serif; color: #3c3c3c; }
.winbtns { display: flex; gap: 11px; }
.winbtns svg { width: 12px; height: 12px; }

.menu { height: 24px; display: flex; align-items: center; gap: 14px; color: #3b3b3b; padding-left: 5px; }
.grip { width: 3px; height: 15px; background: repeating-linear-gradient(#b3b9c2 0 2px, transparent 2px 4px); }
.menu .grip { margin-right: -6px; }

.bars { display: flex; height: 26px; padding-left: 2px; }
.bar {
  display: flex; align-items: center; height: 26px; border-radius: 4px;
  background: linear-gradient(#fff 0, #fff 35%, #e4e7ef 92%, #9a9da6 96%);
}
.bar > .grip { margin: 0 2px 0 3px; }
.bar.narrow > .grip { margin-right: 4px; }
.bar:nth-child(2) > .grip { margin: 0 3px; }
.bar.wide > .grip { margin: 0 3px 0 5px; }
.b { width: 22px; height: 22px; border-radius: 3px; }
.b svg { width: 16px; height: 16px; }
.b.on { background: #ffdf85; border: 1px solid #c5933c; }
.b.hot { background: #fff0c2; border: 1px solid #e6c476; }
.d { width: 13px; height: 22px; }
.d svg { width: 5px; height: 3px; margin-left: 1px; }
.narrow .d { width: 11px; }
.sep { width: 8px; height: 14px; background: linear-gradient(#9c9c9c, #9c9c9c) 3px 0 / 1px 14px no-repeat; }
.narrow .sep { width: 9px; }
.fx { color: #000080; font: 13px/16px "DejaVu Sans Condensed", sans-serif; }
.cap { width: 10px; height: 26px; border-radius: 0 4px 4px 0; background: linear-gradient(#c9ccd2, #8d9098); align-items: flex-end; padding-bottom: 2px; margin-left: 1px; }
.cap svg { width: 8px; height: 8px; }
.cap.late { margin-left: 3px; }

.combo { position: relative; height: 20px; border: 1px solid #a49f8b; background: #fff; margin: 0 1px; flex: none; }
.w60 { width: 60px; }
.w65 { width: 65px; }
.w126 { width: 126px; }
.combo select { appearance: none; border: 0; background: none; width: 100%; height: 18px; padding: 0 15px 0 4px; font: inherit; color: #000; }
.combo i { position: absolute; right: 1px; top: 1px; width: 14px; height: 16px; background: #c5d3f4; border-radius: 2px; display: flex; align-items: center; justify-content: center; pointer-events: none; }
.combo i svg { width: 9px; height: 6px; }

.work { flex: 1; display: flex; min-height: 0; }
.side { width: 26px; padding: 4px 1px 0 1px; display: flex; flex-direction: column; }
.hgrip { height: 5px; background: repeating-linear-gradient(90deg, #b3b9c2 0 2px, transparent 2px 4px) 4px 0 / 16px 2px no-repeat, linear-gradient(90deg, #fff, #e6e9f0); }
.modes { display: flex; flex-direction: column; background: repeating-linear-gradient(#b3b9c2 0 1px, transparent 1px 4px) 1px 0 / 1px 100% no-repeat, linear-gradient(90deg, #fff, #e6e9f0); padding-left: 6px; }
.modes button { width: 17px; height: 17px; }
.modes svg { width: 14px; height: 14px; }
.modes .on { background: #ffdf85; outline: 1px solid #4c5c8c; outline-offset: -1px; }
.hsep { height: 8px; background: linear-gradient(#8f98a5, #8f98a5) 5px 4px / 14px 1px no-repeat; }
.tools { background: linear-gradient(90deg, #fff, #e6e9f0); padding-left: 1px; }
.tools button { width: 22px; height: 22px; }
.tools svg { width: 16px; height: 16px; }
.sidecap { height: 12px; margin: 0 0 0 -1px; background: linear-gradient(90deg, #8f939b, #c9ccd2); border-radius: 0 0 4px 4px; padding-left: 12px; }
.sidecap svg { width: 6px; height: 7px; }

.docs { flex: 1; min-width: 0; display: flex; flex-direction: column; border: 1px solid #a6a694; border-top-color: #9c9c8c; background: #ffe27f; }
.tabs { height: 23px; display: flex; align-items: flex-end; background: linear-gradient(#e4e7ec, #fff); }
.tab { position: relative; height: 22px; display: flex; align-items: center; gap: 15px; }
.tab > * { position: relative; }
.tab .shape { position: absolute; left: 0; top: 0; width: 100%; height: 22px; }
.tab .ti { width: 16px; height: 16px; }
.tab.start { width: 186px; padding-left: 26px; }
.tab.cur { width: 132px; margin-left: -21px; padding-left: 24px; gap: 11px; font-weight: bold; font-size: 12px; }
.tab .x { width: 8px; height: 8px; }
.tablist { margin-left: auto; height: 22px; padding-right: 6px; }
.tablist svg { width: 10px; height: 5px; }

.frame { flex: 1; display: flex; gap: 6px; margin: 2px 2px 2px 3px; background: #e1e5e9; }
.panel { width: 198px; flex: none; display: flex; flex-direction: column; }
.phead { height: 18px; background: #0854e4; color: #fff; display: flex; align-items: center; gap: 9px; padding: 0 5px 0 3px; }
.phead h2 { flex: 1; font-size: 11px; }
.phead svg { width: 8px; height: 9px; }
.ptools { height: 26px; display: flex; align-items: center; background: linear-gradient(#fafbfc, #e4e7ee); }
.ptools .b:nth-child(2) { margin-left: 2px; }
.d.dim { color: #888; }
.trees { flex: 1; display: flex; flex-direction: column; gap: 2px; padding: 2px; background: #ece9d8; border: 1px solid #aca899; border-bottom-color: #6e6c60; }
.box { background: #fff; border: 1px solid #aca899; padding-left: 6px; }
.box.main { flex: 1; padding-top: 1px; }
.box.rel { height: 208px; }
.node { display: flex; align-items: center; height: 20px; gap: 7px; white-space: nowrap; }
.node svg { width: 16px; height: 16px; }
.box.rel > .node { height: 18px; }
.node.strong { font-weight: bold; }
.box ul { margin-left: 8px; }
.box ul ul { margin-left: 0; }
.box li { position: relative; padding-left: 15px; }
.box li::before { content: ""; position: absolute; left: 0; top: 0; height: 100%; border-left: 1px dotted #9c9a8c; }
.box li:last-child::before { height: 10px; }
.box li::after { content: ""; position: absolute; left: 0; top: 10px; width: 13px; border-top: 1px dotted #9c9a8c; }
.box li ul { padding-left: 8px; }
.exp { position: absolute; z-index: 1; left: -4px; top: 6px; width: 9px; height: 9px; border: 1px solid #7898b5; background: linear-gradient(#fff, #d8d4c8); line-height: 7px; font-size: 9px; font-weight: bold; }
.cx { color: #ff7a38; }
.cy { color: #3d9a28; }
.cz { color: #7a20c0; }
.node.edit { gap: 4px; }
.edit input { width: 94px; height: 18px; border: 1px solid #000; padding: 0 1px; margin: 0; font: bold 11px/14px "DejaVu Sans Condensed", sans-serif; color: #fff; background: linear-gradient(#316ac5, #316ac5) 1px 2px / 80px 12px no-repeat, #fff; outline: 0; }
.ptabs { height: 19px; display: flex; gap: 8px; padding-left: 2px; color: #444; }
.ptabs a { line-height: 18px; }
.ptabs .sel { background: #fff; border: 1px solid #aaaeb6; border-top: 0; border-radius: 0 0 4px 4px; padding: 0 3px; height: 17px; }
.canvas { flex: 1; min-width: 0; position: relative; background: #fff; border: 1px solid #6e6c60; border-right-color: #f2eee0; border-bottom-color: #f2eee0; }
.canvas > svg { position: absolute; inset: 0; width: 100%; height: 100%; }
.axl { font: 11px "DejaVu Serif", serif; }

.prop { height: 67px; display: flex; padding: 7px 6px 8px 28px; gap: 2px; }
.vgrip { width: 2px; background: repeating-linear-gradient(#8f8d84 0 2px, transparent 2px 4px); }
.field { flex: 1; height: 35px; border: 1px solid #a6a498; border-bottom-color: #6e6c60; background: linear-gradient(#fff 40%, #f1f4f7); outline: 3px solid #ece9d8; outline-offset: -4px; }
.status { height: 18px; display: flex; justify-content: space-between; align-items: center; border-top: 1px solid #949aa2; background: linear-gradient(#e2e5ea, #c6cad0); padding: 3px 5px 0; color: #3c3c3c; }
.status b { color: #fff; font: bold 11px/14px "DejaVu Sans", sans-serif; margin-top: -6px; text-shadow: 1px 0 #000, -1px 0 #000, 0 1px #000, 0 -1px #000, 1px 1px #000, -1px -1px #000, 1px -1px #000, -1px 1px #000; }
```
